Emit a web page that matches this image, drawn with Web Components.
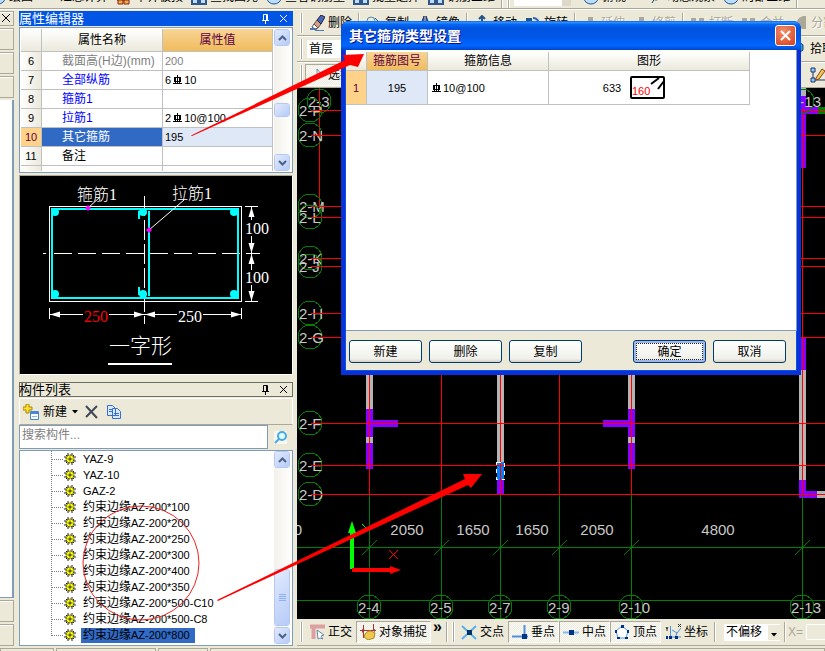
<!DOCTYPE html>
<html lang="zh-CN">
<head>
<meta charset="utf-8">
<title>属性编辑器</title>
<style>
    body {
        margin: 0;
        min-height: 100vh;
        display: flex;
        flex-direction: column;
        overflow: hidden;
        position: relative;
        background: #ece9d8;
        color: #000;
        font: 12px/16px "Liberation Sans", "Noto Sans CJK SC", sans-serif;
        --line: #aca899;
        --field: #7f9db9;
    }
    main {
        flex: 1;
        display: grid;
        grid-template-columns: 14px 275px minmax(0, 1fr);
        column-gap: 4px;
        padding-top: 1px;
    }
    .left, .right {
        display: flex;
        flex-direction: column;
        min-width: 0;
    }
    .left {
        gap: 7px;
        padding-left: 1px;
    }
</style>
</head>
<body>
<menu-strip></menu-strip>
<main>
    <side-strip></side-strip>
    <div class="left">
        <dock-panel heading="属性编辑器" active>
            <property-grid></property-grid>
            <section-preview></section-preview>
        </dock-panel>
        <dock-panel heading="构件列表" grow>
            <component-list></component-list>
        </dock-panel>
    </div>
    <div class="right">
        <edit-toolbars></edit-toolbars>
        <drawing-canvas></drawing-canvas>
        <snap-toolbar></snap-toolbar>
    </div>
</main>
<status-strip></status-strip>
<xp-dialog heading="其它箍筋类型设置">
    <stirrup-table></stirrup-table>
    <xp-button slot="left">新建</xp-button>
    <xp-button slot="left">删除</xp-button>
    <xp-button slot="left">复制</xp-button>
    <xp-button slot="right" focused>确定</xp-button>
    <xp-button slot="right">取消</xp-button>
</xp-dialog>
<mark-layer></mark-layer>

<script>
// small helper : every component only gives its markup
function define(name, html, setup) {
    const template = document.createElement('template');
    template.innerHTML = html;
    customElements.define(name, class extends HTMLElement {
        constructor() {
            super();
            this.attachShadow({mode: 'open'}).appendChild(template.content.cloneNode(true));
        }

        connectedCallback() {
            setup && setup(this, this.shadowRoot);
        }
    });
}

const rebar = `<svg class="rebar" width="9" height="10" viewBox="0 0 9 10" fill="none" stroke="#000" shape-rendering="crispEdges"><path d="M4.500 0V9M1.500 2.500H7.500V6.500H1.500ZM0 8.500H9M2.500 2V9M6.500 2V9"/></svg>`;

const icons = {
    eraser: `<path d="M1 14h5l2 2h7" stroke="#4a78b8" stroke-width="2" fill="none"/><path d="M5 9l4 4-3 1-3-2z" fill="#fff" stroke="#555"/><path d="M8 5l4 4-3 4-4-4z" fill="#d98" stroke="#555"/><path d="M12 0l4 2-4 7-4-4z" fill="#46b" stroke="#223"/>`,
    copy: `<circle cx="5" cy="6" r="4" fill="none" stroke="#58a"/><path d="M9 3l5 5v6H9" fill="#cde" stroke="#358"/>`,
    mirror: `<path d="M7 1L2 14h5zM9 1l5 13H9z" fill="#48c" stroke="#236"/>`,
    move: `<path d="M8 1v14M1 8h14M5 4l3-3 3 3" fill="none" stroke="#258" stroke-width="2"/>`,
    rotate: `<path d="M1 3h6v6H1z" fill="#258"/><path d="M8 3q6 0 6 8M11 9l3 4 2-4" fill="none" stroke="#36b" stroke-width="2"/>`,
    pick: `<path d="M8 2v10l-3-3M8 2l5 6H9" fill="#fff" stroke="#68a"/>`,
    bar: `<path d="M6 2h5v13H4v-3h2z" fill="#aca899"/>`,
    bars: `<path d="M1 3h5v4l1 2-3 3H1zM9 3h5v8H9z" fill="#aca899"/>`,
    wedge: `<path d="M11 1h3v13h-4L6 11H2l5-8z" fill="#aca899"/>`,
    ortho: `<path d="M1 2.500h15M4.500 1v14" stroke="#dca0a0" stroke-width="4"/><path d="M8 6l7 5-3 1 2 3-3-1-2 1z" fill="#fff" stroke="#68a"/>`,
    snap: `<path d="M0 6.500h16M3.500 1v13M13.500 0v7" stroke="#a33" fill="none"/><path d="M2 5l3 1-3 3M15 5l-3 1 3 2" fill="#a33"/><path d="M5 10q3-4 6-3l4 2-1 5-6 2-4-3z" fill="#f0c850" stroke="#a82"/>`,
    cross: `<path d="M1 2l14 13M15 2L1 15" stroke="#58b0f0" stroke-width="2"/><path d="M6 6h5v5H6z" fill="#036"/>`,
    perp: `<path d="M0 12.500h16M12.500 1v13" stroke="#5090e0" stroke-width="2"/><path d="M10 10h5v5h-5z" fill="#038"/>`,
    middle: `<path d="M0 8.500h16" stroke="#80b8f0" stroke-width="2"/><path d="M6 6h5v5H6z" fill="#038"/>`,
    vertex: `<path d="M8 2l6 5-2 7H4L2 7z" fill="#fff" stroke="#48a0f0"/><path d="M7 1h3v3H7zM1 6h2v3H1zM13 6h2v3h-2zM3 13h3v2H3zM11 13h3v2h-3z" fill="#038"/>`,
    coord: `<path d="M5.500 2v11H16M7 6l5 3 4-5M12 9l-2 5" fill="none" stroke="#5090e0"/><path d="M1 3l1 2 1-2M2 4v3M13 0l3 3M16 0l-3 3" stroke="#333" fill="none"/><path d="M4 12h3v3H4zM10 12h3v3h-3zM1 12h2v3H1z" fill="#038"/>`,
    pencil: `<path d="M1 1h4v4H1zM1 11h4v4H1z" fill="#8cf" stroke="#236"/><path d="M3 5v6M5 13h10" stroke="#236"/><path d="M6 11l6-9 3 2-6 8-3 1z" fill="#f0c850" stroke="#842"/>`,
    pin: `<path d="M4 5q4-6 8-1v5q-4 4-8 0zM4 14l3-5" fill="#49c" stroke="#146"/>`,
    house: `<path d="M1 1h12v11H1z" fill="#c33"/><path d="M2 11h5v4H2zM8 11h5v4H8z" fill="#f0b040" stroke="#822"/>`,
    glass: `<path d="M1 9h6v6H1zM9 9h6v6H9z" fill="#bdf" stroke="#358" stroke-width="2"/>`,
    globe: `<ellipse cx="8" cy="9" rx="7" ry="6" fill="#bdf" stroke="#258"/>`,
};

// <tool-button icon="cross">交点</tool-button>
define('tool-button', `
<style>
    :host { display: block; flex: none; }
    button {
        display: flex;
        align-items: center;
        gap: 3px;
        height: 22px;
        padding: 0 3px;
        border: 1px solid transparent;
        background: none;
        color: inherit;
        font: inherit;
        white-space: nowrap;
    }
    svg { flex: none; }
    :host([pressed]) button {
        border-color: #aca899 #fff #fff #aca899;
        background: repeating-conic-gradient(#fff 0 25%, #ece9d8 0 50%) 0 0 / 2px 2px;
    }
    :host([off]) button { color: #aca899; text-shadow: 1px 1px #fff; }
</style>
<button type="button"><svg width="16" height="16" viewBox="0 0 16 16"></svg><slot></slot></button>
`, (el, root) => {
    root.querySelector('svg').innerHTML = icons[el.getAttribute('icon')] || '';
});

define('tool-split', `
<style>
    :host { display: block; flex: none; width: 1px; height: 20px; margin: 0 2px; background: #aca899; border-right: 1px solid #fff; }
    :host([grip]) { border-left: 1px solid #fff; }
</style>`);

define('menu-strip', `
<style>
    :host {
        display: flex;
        align-items: flex-end;
        height: 8px;
        overflow: hidden;
        border-bottom: 1px solid var(--line);
        box-shadow: 0 1px #fff;
        margin-bottom: 1px;
        white-space: nowrap;
    }
    nav { display: flex; align-items: flex-end; margin-left: -14px; }
    .field { width: 48px; height: 22px; margin: 0 8px 2px 2px; background: #fff; border-right: 9px solid #ddd8c8; }
    .gap { width: 14px; }
</style>
<nav>
    <tool-button icon="globe">绘图</tool-button>
    <tool-button>汇总计算</tool-button>
    <tool-button icon="house">平齐板顶</tool-button>
    <tool-button icon="glass">查找图元</tool-button>
    <tool-button icon="globe">查看钢筋量</tool-button>
    <tool-button icon="glass">批量选择</tool-button>
    <tool-button icon="glass">钢筋三维</tool-button>
    <tool-split></tool-split><tool-split grip></tool-split>
    <span class="field"></span>
    <tool-button icon="globe">俯视</tool-button>
    <span class="gap"></span>
    <tool-button icon="pin">动态观察</tool-button>
    <tool-button icon="globe">局部三维</tool-button>
    <tool-split></tool-split>
</nav>
`);

define('side-strip', `
<style>
    :host { display: flex; flex-direction: column; gap: 2px; }
    button, i {
        box-sizing: border-box;
        height: 22px;
        width: 14px;
        border: 1px solid var(--line);
        border-width: 1px 1px 1px 0;
        background: #ece9d8;
        box-shadow: inset 0 1px #fff;
    }
    button { height: 15px; padding: 2px; flex: none; }
    button svg { display: block; }
    div {
        flex: 1;
        background: #fff;
        border-right: 2px solid var(--field);
        border-bottom: 1px solid var(--field);
    }
</style>
<button type="button" aria-label="关闭"><svg width="9" height="9"><path d="M0 0l8 8M8 0L0 8" stroke="#000"/></svg></button>
<i></i><i></i><i></i>
<div></div>
<i></i><i></i>
`);

define('dock-panel', `
<style>
    :host { display: flex; flex-direction: column; gap: 1px; }
    :host([grow]) { flex: 1; }
    header {
        display: flex;
        align-items: center;
        box-sizing: border-box;
        height: 15px;
        border: 1px solid #716f64;
        font-size: 13px;
    }
    :host([active]) header { background: #0055e5; border-color: #0055e5; color: #fff; }
    span { flex: 1; margin-left: -1px; }
    button { border: 0; padding: 0; background: none; color: inherit; width: 18px; height: 12px; }
    svg { display: block; margin: auto; }
</style>
<header>
    <span></span>
    <button type="button" aria-label="固定"><svg width="9" height="10" fill="none" stroke="currentColor"><path d="M2.500 6V.5H6.500V6M5.500 0V6M1 6.500H8M4.500 7V10"/></svg></button>
    <button type="button" aria-label="关闭"><svg width="9" height="9" fill="none" stroke="currentColor"><path d="M1 1l7 7M8 1L1 8"/></svg></button>
</header>
<slot></slot>
`, (el, root) => {
    root.querySelector('span').textContent = el.getAttribute('heading');
});

// XP scroll bar, --before / --after give the position of the thumb
define('xp-scroll', `
<style>
    :host {
        display: flex;
        flex-direction: column;
        flex: none;
        width: 17px;
        background: linear-gradient(90deg, #f3f1ec, #fefefb);
    }
    button {
        box-sizing: border-box;
        flex: none;
        width: 16px;
        height: 17px;
        padding: 0;
        border: 1px solid #fff;
        outline: 1px solid #b4c8f0;
        outline-offset: -1px;
        border-radius: 3px;
        background: linear-gradient(135deg, #e1eafe, #b7cbf7);
    }
    svg { display: block; margin: auto; }
    .thumb { height: var(--thumb, 14px); }
    .a { flex: var(--before, 1); }
    .b { flex: var(--after, 1); }
</style>
<button type="button" aria-label="向上"><svg width="9" height="6"><path d="M1 5l3.500-3.500L8 5" fill="none" stroke="#4d6185" stroke-width="2"/></svg></button>
<div class="a"></div>
<button type="button" class="thumb" aria-label="滑块"><svg width="7" height="8"><path class="grip" fill="none" stroke="#8cb0f8"/></svg></button>
<div class="b"></div>
<button type="button" aria-label="向下"><svg width="9" height="6"><path d="M1 1l3.500 3.500L8 1" fill="none" stroke="#4d6185" stroke-width="2"/></svg></button>
`, (el, root) => {
    if (el.hasAttribute('grip')) {
        root.querySelector('.grip').setAttribute('d', 'M0 .5h7M0 2.500h7M0 4.500h7M0 6.500h7');
    }
});

define('property-grid', `
<style>
    :host {
        display: flex;
        box-sizing: border-box;
        height: 146px;
        overflow: hidden;
        border: 1px solid var(--field);
        padding: 1px;
        background: #fff;
    }
    .view { flex: 1; overflow: hidden; }
    table { width: 100%; border-collapse: separate; border-spacing: 0; table-layout: fixed; }
    th, td {
        box-sizing: border-box;
        height: 19px;
        padding: 0;
        border: solid #c0c0c0;
        border-width: 0 1px 1px 0;
        font-weight: normal;
        line-height: 16px;
        white-space: nowrap;
        text-align: left;
    }
    thead th { height: 23px; text-align: center; background: linear-gradient(#fff, #ebe9db); }
    thead th.on { background: linear-gradient(#f8d496, #f0bc5c); color: #600040; }
    tbody th { text-align: center; font-size: 11px; background: linear-gradient(90deg, #fff, #ebe9db); }
    td:nth-child(2) { padding-left: 20px; color: #00f; }
    td:nth-child(3) { padding-left: 2px; font-size: 11px; }
    tr.off td { color: #808080; }
    tr.plain td { color: #000; }
    tr.on th { background: #ffd28a; color: #600040; }
    tr.on td:nth-child(2) { background: #316ac5; color: #fff; }
    tr.on td:nth-child(3) { background: #dfe8f6; }
    .rebar { vertical-align: -1px; margin: 0 2px; }
    xp-scroll { --before: 59; --after: 38; margin-left: 1px; }
</style>
<div class="view">
<table>
    <colgroup><col style="width: 21px"><col style="width: 121px"><col></colgroup>
    <thead><tr><th></th><th>属性名称</th><th class="on">属性值</th></tr></thead>
    <tbody>
        <tr class="off"><th>6</th><td>截面高(H边)(mm)</td><td>200</td></tr>
        <tr><th>7</th><td>全部纵筋</td><td>6${rebar}10</td></tr>
        <tr><th>8</th><td>箍筋1</td><td></td></tr>
        <tr><th>9</th><td>拉筋1</td><td>2${rebar}10@100</td></tr>
        <tr class="on"><th>10</th><td>其它箍筋</td><td>195</td></tr>
        <tr class="plain"><th>11</th><td>备注</td><td></td></tr>
        <tr><th></th><td></td><td></td></tr>
    </tbody>
</table>
</div>
<xp-scroll></xp-scroll>
`);

// Section of the member with its dimensions
define('section-preview', `
<style>
    :host { display: block; margin-top: 1px; border: 1px solid #fff; border-color: #aca899 #fff #fff #aca899; background: #000; }
    svg { display: block; width: 100%; height: 198px; }
    text { font: 16px "Liberation Serif", "Noto Sans CJK SC", serif; font-weight: 300; fill: #fff; stroke: none; }
</style>
<svg fill="none" stroke="#fff">
    <rect x="29.500" y="30.500" width="192" height="95"/>
    <path d="M23 77.500H26M34 77.500H240" stroke-dasharray="18 6"/>
    <path d="M124.500 20V148" stroke-dasharray="20 4"/>
    <g stroke="#0ff" stroke-width="2">
        <rect x="32" y="33" width="186" height="89"/>
        <path d="M129 35V120M119 43V36H124M119 111V118H124"/>
    </g>
    <g fill="#0ff" stroke="none">
        <circle cx="35" cy="36" r="4"/><circle cx="123" cy="36" r="4"/><circle cx="214" cy="36" r="4"/>
        <circle cx="35" cy="118" r="4"/><circle cx="123" cy="118" r="4"/><circle cx="214" cy="118" r="4"/>
    </g>
    <path d="M80 21L68 32M164 24L129 54"/>
    <path d="M68 29l3 3-3 3-3-3zM129 51l3 3-3 3-3-3z" fill="#f0f" stroke="none"/>
    <path d="M225 30.500H238M225 125.500H238M231.500 31V44M231.500 60V94M231.500 109V125M29.500 132V143M221.500 132V143M30 138.500H63M89 138.500H157M183 138.500H221"/>
    <path d="M231.500 31l3 10h-6zM231.500 77l3-10h-6zM231.500 78l3 10h-6zM231.500 125l3-10h-6zM30 138.500l10-3v6zM124 138.500l-10-3v6zM125 138.500l10-3v6zM221 138.500l-10-3v6z" fill="#fff" stroke="none"/>
    <path d="M88 188H152" stroke-width="2"/>
    <text x="57" y="24">箍筋1</text>
    <text x="152" y="23">拉筋1</text>
    <text x="225" y="58">100</text>
    <text x="225" y="107">100</text>
    <text x="64" y="146" style="fill: #f00">250</text>
    <text x="158" y="146">250</text>
    <text x="89" y="177" style="font-size: 21px">一字形</text>
</svg>
`);

define('component-list', `
<style>
    :host { display: flex; flex-direction: column; flex: 1; }
    .bar {
        display: flex;
        align-items: center;
        gap: 7px;
        height: 25px;
        padding: 0 3px;
        border: 1px solid #fff;
        border-bottom-color: var(--line);
    }
    .bar button, .search button {
        display: flex;
        align-items: center;
        gap: 4px;
        padding: 0;
        border: 0;
        background: none;
        font: inherit;
    }
    .search { display: flex; align-items: center; gap: 6px; padding: 0 6px 1px 0; }
    input {
        flex: 1;
        min-width: 0;
        box-sizing: border-box;
        height: 24px;
        padding: 0 2px 4px;
        border: 1px solid var(--field);
        font: inherit;
    }
    input::placeholder { color: #808080; }
    .tree {
        flex: 1;
        display: flex;
        border: 1px solid var(--field);
        background: #fff;
        padding: 0 1px 1px;
    }
    ul {
        flex: 1;
        margin: 0 0 0 30px;
        padding: 0;
        list-style: none;
    }
    li { display: flex; align-items: center; height: 16px; white-space: nowrap; }
    li::before {
        content: "";
        align-self: flex-start;
        width: 11px;
        height: 8px;
        border: dotted #808080;
        border-width: 0 0 1px 1px;
    }
    li:not(:last-child)::before { height: 15px; border-bottom: 0; background: linear-gradient(90deg, #808080 50%, transparent 0) 0 8px / 2px 1px repeat-x; }
    li svg { margin: 0 5px 0 1px; flex: none; }
    li span { padding: 0 2px; line-height: 15px; }
    li small { font-size: 11px; }
    li.on span { background: #316ac5; padding-right: 5px; }
    xp-scroll { --before: 103; --after: 1; --thumb: 57px; }
</style>
<div class="bar">
    <button type="button"><svg width="16" height="16" viewBox="0 0 16 16"><path d="M3 0h3v3h3v3H6v3H3V6H0V3h3z" fill="#fd3" stroke="#a80"/><path d="M7.500 7.500h8v8h-8z" fill="#fff" stroke="#48c"/><path d="M8 8h7v2H8z" fill="#48d"/><path d="M9 12.500h5" stroke="#8bd"/></svg>新建<svg width="7" height="4"><path d="M1 0h6L4 3.500z"/></svg></button>
    <button type="button" aria-label="删除"><svg width="14" height="14"><path d="M1 1l11 12M12 1L1 12" stroke="#404858" stroke-width="2"/></svg></button>
    <button type="button" aria-label="复制"><svg width="16" height="14" fill="#d8e8ff" stroke="#3870c8"><path d="M1.500.5h5l3 3v7h-8zM6.500 3.500h5l3 3v7h-8z"/><path d="M3 4.500h3M3 6.500h3M8 8.500h5M8 10.500h5"/></svg></button>
</div>
<div class="search">
    <input type="search" aria-label="搜索构件" placeholder="搜索构件...">
    <button type="button" aria-label="搜索"><svg width="13" height="13"><path d="M0 0h13v13H0z" fill="#fff" opacity=".6"/><circle cx="8" cy="5" r="4" fill="#dff" stroke="#48a8e8" stroke-width="2"/><path d="M5 8l-4 4" stroke="#48a8e8" stroke-width="2"/></svg></button>
</div>
<div class="tree"><ul></ul><xp-scroll grip></xp-scroll></div>
`, (el, root) => {
    const names = ['YAZ-9', 'YAZ-10', 'GAZ-2', '约束边缘AZ-200*100', '约束边缘AZ-200*200', '约束边缘AZ-200*250', '约束边缘AZ-200*300',
        '约束边缘AZ-200*400', '约束边缘AZ-200*350', '约束边缘AZ-200*500-C10', '约束边缘AZ-200*500-C8', '约束边缘AZ-200*800'];
    const gear = `<svg width="12" height="12"><path d="M4 0v12M8 0v12M0 4h12M0 8h12M2 2l8 8M10 2l-8 8" stroke="#222"/><circle cx="6" cy="6" r="4" fill="#ff0"/><circle cx="6" cy="6" r="4" fill="none" stroke="#222" stroke-dasharray="2 1"/><path d="M6 2v8M2 6h8" stroke="#aa0"/><circle cx="6" cy="6" r="1" fill="#fff" stroke="#222"/></svg>`;

    root.querySelector('ul').innerHTML = names.map((name, i) =>
        `<li class="${i === names.length - 1 ? 'on' : ''}">${gear}<span>${name.replace(/[\x20-\x7e]+/, '<small>$&</small>')}</span></li>`
    ).join('');
});

define('edit-toolbars', `
<style>
    :host { display: flex; flex-direction: column; height: 77px; overflow: hidden; }
    div {
        display: flex;
        align-items: center;
        box-sizing: border-box;
        height: 25px;
        padding-left: 1px;
        border-bottom: 1px solid var(--line);
        box-shadow: 0 1px #fff;
        margin-bottom: 1px;
    }
    div:last-child { margin: 0; box-shadow: none; }
    select { appearance: none; flex: none; width: 120px; height: 18px; border: 0; padding: 0 2px; margin-left: 2px; border-radius: 0; background: #fff; font: inherit; }
    .space { flex: none; width: 360px; }
    .space.wide { width: 450px; }
</style>
<div>
    <tool-split grip></tool-split><tool-button icon="eraser">删除</tool-button><tool-split></tool-split>
    <tool-button icon="copy">复制</tool-button><tool-button icon="mirror">镜像</tool-button><tool-split></tool-split>
    <tool-button icon="move">移动</tool-button><tool-button icon="rotate">旋转</tool-button><tool-split></tool-split>
    <tool-button icon="bar" off>延伸</tool-button><tool-button icon="bar" off>修剪</tool-button><tool-split></tool-split>
    <tool-button icon="bars" off>打断</tool-button><tool-button icon="bars" off>合并</tool-button><tool-button icon="wedge" off>分割</tool-button>
</div>
<div>
    <tool-split grip></tool-split>
    <select aria-label="楼层"><option>首层</option></select>
    <span class="space"></span>
    <tool-button icon="pin">拾取构件</tool-button>
</div>
<div>
    <tool-split grip></tool-split>
    <tool-button icon="pick" pressed>选择</tool-button>
    <span class="space wide"></span>
    <tool-button icon="pencil"></tool-button>
</div>
`);

// Plan view : axis grid, walls and dimensions
define('drawing-canvas', `
<style>
    :host { display: flex; flex: 1; background: #000; overflow: hidden; }
    svg { flex: 1; width: 100%; }
    text { font: 15px "Liberation Sans", sans-serif; fill: #c8c8c8; stroke: none; }
</style>
<svg fill="none" shape-rendering="crispEdges">
    <g stroke="none">
        <path d="M69 280h7v41h-7zM69 349h7v6h-7zM331 280h7v41h-7zM331 349h7v6h-7zM200 280h7v94h-7zM502 282h7v110h-7zM520 403h40v7h-40zM504 0h5v8h-5z" fill="#b4b4b4"/>
        <path d="M69 321h7v28h-7zM69 355h7v26h-7zM76 332h25v7h-25zM331 321h7v28h-7zM331 355h7v26h-7zM306 332h25v7h-25zM200 392h7v14h-7zM502 392h7v18h-7zM509 403h11v7h-11zM502 8h7v72h-7zM509 19h12v7h-12zM502 249h7v33h-7z" fill="#80f"/>
        <path d="M521 19h30v7h-30z" fill="#008000"/>
        <path d="M200 374h7v18h-7z" fill="#0080ff"/>
    </g>
    <g id="axes"></g>
    <rect x="199.500" y="374.500" width="8" height="17" stroke="#fff" stroke-dasharray="4 4"/>
    <g shape-rendering="auto">
        <path d="M55 481V443" stroke="#0f0" stroke-width="4"/><path d="M55 433l4 12h-8z" fill="#0f0"/>
        <path d="M55 482H94" stroke="#f00" stroke-width="4"/><path d="M104 482l-11-4v8z" fill="#f00"/>
        <path d="M92 462l9 9M101 462l-9 9" stroke="#f00"/>
        <path d="M65 436l5 5" stroke="#0f0"/>
    </g>
</svg>
`, (el, root) => {
    const rows = {P: 22, N: 47, M: 118, L: 129, K: 170, J: 178, H: 225, G: 249, F: 335, E: 377, D: 406};
    const columns = {4: 72, 5: 144, 7: 203, 9: 262, 10: 334, 13: 505};
    const sizes = [['2050', 110], ['1650', 176], ['1650', 235], ['2050', 300], ['4800', 421]];
    const bubble = (x, y, label) => `
        <circle cx="${x}" cy="${y}" r="12" stroke="#008000"/>
        <text x="${x - 11}" y="${y + 6}">2-${label}</text>`;
    let svg = `<path d="M22.500 0V118" stroke="#f00"/>` + bubble(22, 13, '3');

    for (const [label, y] of Object.entries(rows)) {
        svg += bubble(13, y, label) + `<line x1="14" x2="100%" y1="${y}.5" y2="${y}.5" stroke="#f00"/>`;
    }
    for (const [label, x] of Object.entries(columns)) {
        svg += `<path d="M${x}.5 20V406" stroke="#f00"/><path d="M${x}.5 407V531M${x - 7} 467l15-15" stroke="#008000"/>` + bubble(x, 519, label);
    }
    svg += `<line x2="100%" y1="459.500" y2="459.500" stroke="#008000"/><line x2="100%" y1="512.500" y2="512.500" stroke="#008000"/>`;
    svg += `<text x="5" y="447" text-anchor="end">0</text>` + bubble(505, 13, '13');
    svg += sizes.map(([size, x]) => `<text x="${x}" y="447" text-anchor="middle">${size}</text>`).join('');
    root.querySelector('#axes').innerHTML = svg;
});

define('snap-toolbar', `
<style>
    :host {
        display: flex;
        align-items: center;
        box-sizing: border-box;
        height: 27px;
        padding-left: 1px;
        border-bottom: 1px solid var(--line);
        overflow: hidden;
    }
    .more { border: 0; background: none; padding: 0 2px; font: bold 16px/16px "Liberation Sans", sans-serif; align-self: flex-start; }
    select {
        appearance: none;
        flex: none;
        width: 56px;
        height: 17px;
        padding: 0 2px;
        margin: 0 2px 0 6px;
        border: 0;
        border-radius: 0;
        background: #fff linear-gradient(#ece9d8, #ece9d8) right / 12px 15px no-repeat;
        font: inherit;
        line-height: 16px;
    }
    .drop { position: relative; flex: none; }
    .drop svg { position: absolute; right: 5px; top: 9px; }
    label { display: flex; align-items: center; gap: 3px; color: var(--line); }
    input { width: 60px; height: 14px; border: 1px solid #fff; background: none; padding: 0; }
</style>
<tool-split grip></tool-split>
<tool-button icon="ortho">正交</tool-button>
<tool-button icon="snap" pressed>对象捕捉</tool-button>
<button type="button" class="more">»</button>
<tool-split></tool-split><tool-split grip></tool-split>
<tool-button icon="cross">交点</tool-button>
<tool-button icon="perp" pressed>垂点</tool-button>
<tool-button icon="middle" pressed>中点</tool-button>
<tool-button icon="vertex" pressed>顶点</tool-button>
<tool-button icon="coord">坐标</tool-button>
<tool-split></tool-split>
<span class="drop"><select aria-label="偏移"><option>不偏移</option></select><svg width="6" height="4"><path d="M0 0h6L3 3.500z"/></svg></span>
<tool-split></tool-split>
<label>X=<input type="text" disabled></label>
`);

define('status-strip', `
<style>
    :host { display: flex; gap: 2px; height: 3px; margin-top: 2px; overflow: hidden; }
    i { flex: none; width: 98px; border: 1px solid var(--line); border-bottom: 0; }
    i:nth-of-type(1) { width: 52px; }
    i:nth-of-type(3) { width: 48px; }
    i:last-child { flex: 1; }
</style>
<i></i><i></i><i></i><i></i>
`);

define('xp-button', `
<style>
    :host { display: block; }
    button {
        box-sizing: border-box;
        width: 73px;
        height: 23px;
        padding: 0;
        border: 1px solid #003c74;
        border-radius: 3px;
        background: linear-gradient(#fff, #f0f0ea 85%, #d6d0c5);
        color: #000;
        font: inherit;
    }
    :host([focused]) button {
        box-shadow: inset 0 0 0 2px #9cb8ee;
        outline: 1px dotted #222;
        outline-offset: -4px;
    }
</style>
<button type="button"><slot></slot></button>
`);

define('xp-dialog', `
<style>
    :host {
        position: absolute;
        left: 341px;
        top: 21px;
        z-index: 1;
        box-sizing: border-box;
        width: 460px;
        height: 354px;
        display: flex;
        flex-direction: column;
        border: solid #0831d9;
        border-width: 0 4px 4px;
        border-radius: 8px 8px 0 0;
        background: #ece9d8;
        box-shadow: inset 0 -1px #0855dd, inset 1px 0 #0855dd, inset -1px 0 #0855dd;
    }
    header {
        display: flex;
        align-items: center;
        height: 29px;
        margin: 0 -4px;
        padding: 0 5px 0 8px;
        border-radius: 8px 8px 0 0;
        background: linear-gradient(#0058ee, #3593ff 4%, #0468f4 12%, #0053e0 25%, #0057e8 55%, #0066ff 85%, #0046c8);
        color: #fff;
        text-shadow: 1px 1px #0f1089;
    }
    h1 { flex: 1; margin: 0; font-size: 14px; }
    header button {
        width: 21px;
        height: 21px;
        padding: 0;
        border: 1px solid #fff;
        border-radius: 3px;
        background: radial-gradient(circle at 40% 30%, #f0906c, #d83c1c);
    }
    header svg { display: block; margin: auto; }
    .body { flex: 1; margin: 0 0 0 1px; background: #fff; border-bottom: 1px solid var(--field); border-right: 1px solid var(--field); }
    footer { display: flex; justify-content: space-between; padding: 9px 11px 8px 4px; }
    footer div { display: flex; gap: 7px; }
</style>
<header>
    <h1></h1>
    <button type="button" aria-label="关闭"><svg width="13" height="13"><path d="M2 2l9 9M11 2l-9 9" stroke="#fff" stroke-width="2"/></svg></button>
</header>
<div class="body"><slot></slot></div>
<footer><div><slot name="left"></slot></div><div><slot name="right"></slot></div></footer>
`, (el, root) => {
    root.querySelector('h1').textContent = el.getAttribute('heading');
});

define('stirrup-table', `
<style>
    :host { display: block; padding-top: 2px; }
    table { width: 404px; border-collapse: separate; border-spacing: 0; table-layout: fixed; }
    th, td {
        box-sizing: border-box;
        height: 34px;
        padding: 0;
        border: solid #c0c0c0;
        border-width: 0 1px 1px 0;
        font-weight: normal;
        font-size: 11px;
        line-height: 16px;
        text-align: center;
    }
    thead th { height: 19px; font-size: 12px; background: linear-gradient(#fff, #ebe9db); }
    thead th.on { background: linear-gradient(#f8d496, #f0bc5c); color: #600040; }
    tbody th { background: #ffd28a; color: #600040; }
    td.on { background: #dfe8f6; }
    td.info { text-align: left; padding-left: 4px; }
    .rebar { vertical-align: -1px; margin-right: 2px; }
    .shape { display: flex; align-items: center; justify-content: center; gap: 9px; padding-right: 30px; }
    text { font: 11px "Liberation Sans", sans-serif; fill: #f00; stroke: none; }
</style>
<table>
    <colgroup><col style="width: 21px"><col style="width: 61px"><col style="width: 121px"><col></colgroup>
    <thead><tr><th></th><th class="on">箍筋图号</th><th>箍筋信息</th><th>图形</th></tr></thead>
    <tbody><tr>
        <th>1</th>
        <td class="on">195</td>
        <td class="info">${rebar}10@100</td>
        <td><div class="shape">633<svg width="35" height="23" fill="none" stroke="#000" stroke-width="2"><rect x="1" y="1" width="33" height="21" rx="1"/><path d="M21 8l8-6M28 13l6-8"/><text x="2" y="19">160</text></svg></div></td>
    </tr></tbody>
</table>
`);

// Hand drawn red marks that lie over the windows
define('mark-layer', `
<style>
    :host { position: absolute; inset: 0; z-index: 2; pointer-events: none; overflow: hidden; }
    svg { display: block; width: 100%; height: 100%; }
</style>
<svg fill="#f00">
    <path d="M191 135.500L345 60 343 55 364 54 358 67 354 66 350 65 192 136z"/>
    <path d="M217 600L465 479 463 474 482 474 471 488 468 485 218 601z"/>
    <ellipse cx="141" cy="563" rx="58" ry="57" fill="none" stroke="#e22"/>
</svg>
`);
</script>
</body>
</html>
